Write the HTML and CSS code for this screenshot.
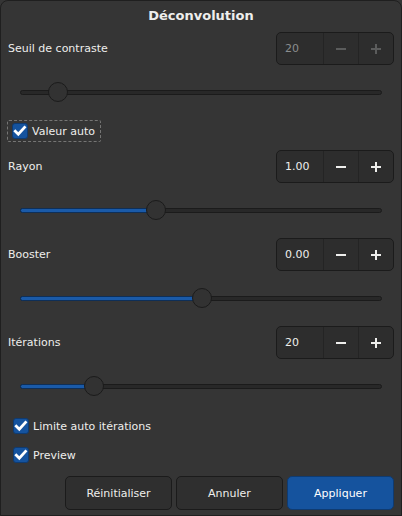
FILE: index.html
```html
<!DOCTYPE html>
<html lang="fr">
<head>
<meta charset="utf-8">
<title>Déconvolution</title>
<link rel="stylesheet" href="styles.css">
</head>
<body>
<div class="window">
  <div class="title">Déconvolution</div>
  <div class="content">
    <div class="row">
      <span class="label">Seuil de contraste</span>
      <div class="spin disabled">
        <span class="spin-value">20</span>
        <span class="spin-btn"><svg width="12" height="12" viewBox="0 0 12 12"><path d="M1 6h10" /></svg></span>
        <span class="spin-btn"><svg width="12" height="12" viewBox="0 0 12 12"><path d="M1 6h10M6 1v10" /></svg></span>
      </div>
    </div>
    <div class="slider"><div class="track"><div class="knob" style="left: 37px"></div></div></div>
    <div class="check-wrap">
      <label class="check focused"><span class="box"><svg width="16" height="16" viewBox="0 0 16 16"><path d="M3.3 8.2l3 3 6.2-6.8" /></svg></span>Valeur auto</label>
    </div>

    <div class="row">
      <span class="label">Rayon</span>
      <div class="spin">
        <span class="spin-value">1.00</span>
        <span class="spin-btn"><svg width="12" height="12" viewBox="0 0 12 12"><path d="M1 6h10" /></svg></span>
        <span class="spin-btn"><svg width="12" height="12" viewBox="0 0 12 12"><path d="M1 6h10M6 1v10" /></svg></span>
      </div>
    </div>
    <div class="slider"><div class="track"><div class="fill" style="width: 135px"></div><div class="knob" style="left: 135px"></div></div></div>

    <div class="row">
      <span class="label">Booster</span>
      <div class="spin">
        <span class="spin-value">0.00</span>
        <span class="spin-btn"><svg width="12" height="12" viewBox="0 0 12 12"><path d="M1 6h10" /></svg></span>
        <span class="spin-btn"><svg width="12" height="12" viewBox="0 0 12 12"><path d="M1 6h10M6 1v10" /></svg></span>
      </div>
    </div>
    <div class="slider"><div class="track"><div class="fill" style="width: 181px"></div><div class="knob" style="left: 181px"></div></div></div>

    <div class="row">
      <span class="label">Itérations</span>
      <div class="spin">
        <span class="spin-value">20</span>
        <span class="spin-btn"><svg width="12" height="12" viewBox="0 0 12 12"><path d="M1 6h10" /></svg></span>
        <span class="spin-btn"><svg width="12" height="12" viewBox="0 0 12 12"><path d="M1 6h10M6 1v10" /></svg></span>
      </div>
    </div>
    <div class="slider"><div class="track"><div class="fill" style="width: 73px"></div><div class="knob" style="left: 73px"></div></div></div>

    <label class="check limit"><span class="box"><svg width="16" height="16" viewBox="0 0 16 16"><path d="M3.3 8.2l3 3 6.2-6.8" /></svg></span>Limite auto itérations</label>
    <label class="check preview"><span class="box"><svg width="16" height="16" viewBox="0 0 16 16"><path d="M3.3 8.2l3 3 6.2-6.8" /></svg></span>Preview</label>

    <div class="actions">
      <button class="btn">Réinitialiser</button>
      <button class="btn">Annuler</button>
      <button class="btn primary">Appliquer</button>
    </div>
  </div>
</div>
</body>
</html>
```

FILE: styles.css
```css
html, body {
  margin: 0;
  padding: 0;
  background: #353535;
}

body {
  font-family: "DejaVu Sans", sans-serif;
  font-size: 11px;
  color: #eeeeec;
}

.window {
  box-sizing: border-box;
  width: 402px;
  height: 516px;
  background: #353535;
  border: 1px solid #1f1f1f;
  border-radius: 8px 8px 0 0;
  display: flex;
  flex-direction: column;
}

.title {
  height: 31px;
  line-height: 29px;
  text-align: center;
  font-weight: bold;
  font-size: 13px;
  color: #eeeeec;
}

.content {
  display: flex;
  flex-direction: column;
  padding: 0 7px;
}

.row {
  height: 33px;
  display: flex;
  align-items: center;
  justify-content: space-between;
}

.spin {
  box-sizing: border-box;
  width: 118px;
  height: 33px;
  display: flex;
  background: #2d2d2d;
  border: 1px solid #1b1b1b;
  border-radius: 5px;
  overflow: hidden;
}

.spin-value {
  width: 46px;
  box-sizing: border-box;
  padding-left: 8px;
  display: flex;
  align-items: center;
  font-size: 11px;
}

.spin-btn {
  flex: 1;
  display: flex;
  align-items: center;
  justify-content: center;
  border-left: 1px solid #242424;
}

.spin-btn svg path {
  stroke: #eeeeec;
  stroke-width: 2;
  fill: none;
}

.spin.disabled .spin-value {
  color: #8b8e8f;
}

.spin.disabled .spin-btn svg path {
  stroke: #5b5c5c;
}

.slider {
  height: 55px;
  padding: 0 12px;
  box-sizing: border-box;
  display: flex;
  align-items: center;
}

.track {
  position: relative;
  flex: 1;
  height: 5px;
  box-sizing: border-box;
  background: #282828;
  border: 1px solid #1b1b1b;
  border-radius: 3px;
}

.fill {
  position: absolute;
  left: -1px;
  top: -1px;
  height: 5px;
  box-sizing: border-box;
  background: #1a5aa8;
  border: 1px solid #0e2f58;
  border-radius: 3px;
}

.knob {
  position: absolute;
  top: -9px;
  width: 20px;
  height: 20px;
  margin-left: -10px;
  box-sizing: border-box;
  border-radius: 50%;
  background: #323232;
  border: 1px solid #1b1b1b;
}

.check-wrap {
  height: 30px;
  display: flex;
  align-items: flex-start;
}

.check {
  display: flex;
  align-items: center;
  gap: 4px;
  height: 18px;
  padding-left: 5px;
}

.check.focused {
  height: 22px;
  box-sizing: border-box;
  padding: 0 5px 0 4px;
  margin-left: -1px;
  border: 1px dashed rgba(238, 238, 236, 0.35);
  border-radius: 2px;
}

.box {
  width: 16px;
  height: 16px;
  box-sizing: border-box;
  background: #15539e;
  border: 1px solid #0f3b71;
  border-radius: 3px;
  display: flex;
  align-items: center;
  justify-content: center;
}

.box svg {
  margin: -1px;
}

.box svg path {
  stroke: #ffffff;
  stroke-width: 2.8;
  fill: none;
  stroke-linecap: square;
}

.check.limit {
  margin-top: 3px;
}

.check.preview {
  margin-top: 11px;
}

.actions {
  margin-top: 12px;
  display: flex;
  justify-content: flex-end;
  gap: 4px;
}

.btn {
  box-sizing: border-box;
  width: 107px;
  height: 34px;
  font-family: "DejaVu Sans", sans-serif;
  font-size: 11px;
  color: #eeeeec;
  background: #2f2f2f;
  border: 1px solid #1b1b1b;
  border-radius: 5px;
  padding: 0;
}

.btn.primary {
  background: #15539e;
  border-color: #0f3b71;
  color: #ffffff;
}
```
